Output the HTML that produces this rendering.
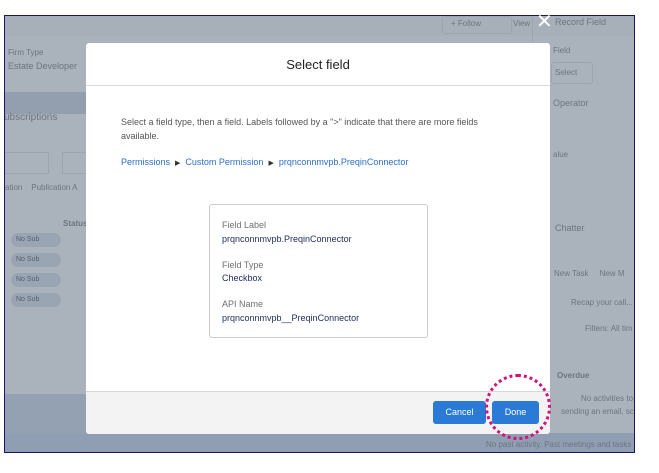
<!DOCTYPE html>
<html><head><style>
body{margin:0;width:659px;height:473px;background:#fff;position:relative;overflow:hidden;font-family:"Liberation Sans",sans-serif;}
.a{position:absolute;}
.frame{left:4px;top:15px;width:629px;height:436px;border:1px solid #1c1464;background:#aab2bb;overflow:hidden;}
.t{position:absolute;font-size:9px;color:#6d7580;white-space:nowrap;}
.pill{position:absolute;left:6px;width:50px;height:14px;border-radius:8px;background:#9aa5b4;font-size:7px;color:#555f6c;line-height:14px;padding-left:5px;box-sizing:border-box;}
.modal{left:86px;top:43px;width:464px;height:390px;background:#fff;border-radius:3px;}
.lbl{font-size:9px;color:#6f6f6f;}
.val{font-size:9px;color:#1b2a5e;}
.btn{position:absolute;top:401px;height:23px;background:#2a7ad6;color:#fff;font-size:9px;line-height:23px;text-align:center;border-radius:3px;}
</style></head><body>
<div class="a frame">
  <div class="a" style="left:0;top:0;width:629px;height:20px;background:#a7afb9"></div>
  <div class="a" style="left:0;top:76px;width:90px;height:22px;background:#939faf"></div>
  <div class="a" style="left:0;top:417px;width:629px;height:20px;background:#8f9eb2"></div>
  <div class="a" style="left:0;top:378px;width:90px;height:40px;background:#93a1b3"></div>
  <div class="t" style="left:3px;top:32px;font-size:8px">Firm Type</div>
  <div class="t" style="left:3px;top:45px">Estate Developer</div>
  <div class="t" style="left:-1px;top:96px;font-size:10px">ubscriptions</div>
  <div class="a" style="left:-2px;top:136px;width:44px;height:20px;border:1px solid #9ca6b2;"></div>
  <div class="a" style="left:57px;top:136px;width:30px;height:20px;border:1px solid #9ca6b2;"></div>
  <div class="t" style="left:0;top:167px;font-size:8px">ation &nbsp;&nbsp; Publication A</div>
  <div class="t" style="left:58px;top:203px;font-weight:bold;font-size:8px">Status</div>
  <div class="pill" style="top:217px">No Sub</div>
  <div class="pill" style="top:237px">No Sub</div>
  <div class="pill" style="top:257px">No Sub</div>
  <div class="pill" style="top:277px">No Sub</div>
  <div class="a" style="left:437px;top:0;width:68px;height:16px;border:1px solid #9ca6b2;border-radius:3px"></div>
  <div class="t" style="left:446px;top:3px;font-size:8px">+ Follow</div>
  <div class="t" style="left:508px;top:3px;font-size:8px">View</div>
  <div class="a" style="left:527px;top:0;width:1px;height:437px;background:#9ca6b2"></div>
  <div class="t" style="left:550px;top:1px;font-size:9px">Record Field</div>
  <div class="t" style="left:548px;top:30px;font-size:8px">Field</div>
  <div class="a" style="left:546px;top:46px;width:40px;height:20px;border:1px solid #9ca6b2;border-radius:3px"></div>
  <div class="t" style="left:550px;top:52px;font-size:8px">Select</div>
  <div class="t" style="left:548px;top:82px">Operator</div>
  <div class="t" style="left:548px;top:134px;font-size:8px">alue</div>
  <div class="t" style="left:550px;top:207px">Chatter</div>
  <div class="t" style="left:549px;top:253px;font-size:8px">New Task &nbsp;&nbsp;&nbsp; New M</div>
  <div class="t" style="left:566px;top:282px;font-size:8px">Recap your call...</div>
  <div class="t" style="left:580px;top:308px;font-size:8px">Filters: All tim</div>
  <div class="t" style="left:552px;top:355px;font-weight:bold;font-size:8px">Overdue</div>
  <div class="t" style="left:576px;top:378px;font-size:8px">No activities to</div>
  <div class="t" style="left:556px;top:391px;font-size:8px">sending an email, sc</div>
  <div class="t" style="left:481px;top:424px;font-size:8px">No past activity. Past meetings and tasks</div>
</div>
<div class="a" style="left:536px;top:12px;color:#fff;font-size:20px;line-height:20px">✕</div>
<div class="a modal">
  <div class="a" style="left:0;top:0;width:464px;height:42px;border-bottom:1px solid #d8d8d8;text-align:center;line-height:44px;font-size:13px;color:#222">Select field</div>
  <div class="a" style="left:35px;top:72px;width:385px;font-size:9px;color:#555;line-height:14px">Select a field type, then a field. Labels followed by a "&gt;" indicate that there are more fields available.</div>
  <div class="a" style="left:35px;top:114px;font-size:9px;color:#2a6fc9;white-space:nowrap">Permissions &nbsp;<span style="color:#333;font-size:7px">▶</span>&nbsp; Custom Permission &nbsp;<span style="color:#333;font-size:7px">▶</span>&nbsp; prqnconnmvpb.PreqinConnector</div>
  <div class="a" style="left:123px;top:161px;width:217px;height:132px;border:1px solid #ccc;border-radius:3px">
    <div class="a lbl" style="left:12px;top:15px">Field Label</div>
    <div class="a val" style="left:12px;top:29px">prqnconnmvpb.PreqinConnector</div>
    <div class="a lbl" style="left:12px;top:55px">Field Type</div>
    <div class="a val" style="left:12px;top:68px">Checkbox</div>
    <div class="a lbl" style="left:12px;top:94px">API Name</div>
    <div class="a val" style="left:12px;top:108px">prqnconnmvpb__PreqinConnector</div>
  </div>
  <div class="a" style="left:0;top:348px;width:464px;height:42px;background:#f3f3f3;border-top:1px solid #d8d8d8;border-radius:0 0 3px 3px"></div>
</div>
<div class="btn" style="left:433px;width:53px">Cancel</div>
<div class="btn" style="left:492px;width:47px">Done</div>
<div class="a" style="left:485px;top:374px;width:66px;height:66px;border:3px dotted #d4107a;border-radius:50%;box-sizing:border-box"></div>
</body></html>
